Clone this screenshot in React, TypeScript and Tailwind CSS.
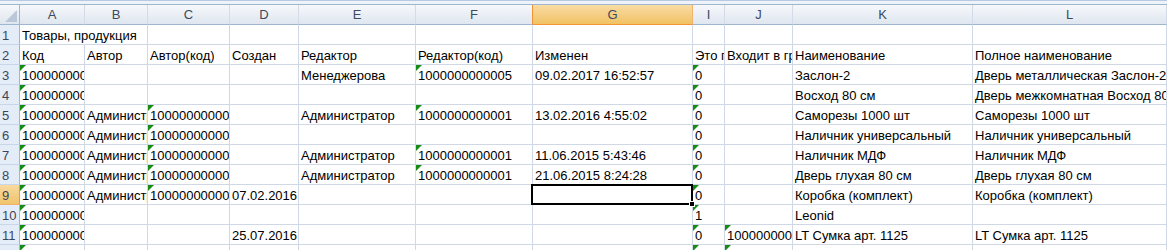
import React from 'react';

const COLS = ['A', 'B', 'C', 'D', 'E', 'F', 'G', 'I', 'J', 'K', 'L'];

type Row = { n: number; v: Record<string, string>; tri: string };

const ADM = 'Администратор';
const ID1 = '1000000000001';

const rows: Row[] = [
  {
    n: 2,
    v: {
      A: 'Код', B: 'Автор', C: 'Автор(код)', D: 'Создан', E: 'Редактор', F: 'Редактор(код)',
      G: 'Изменен', I: 'Это группа', J: 'Входит в группу', K: 'Наименование', L: 'Полное наименование',
    },
    tri: '',
  },
  {
    n: 3,
    v: { A: '1000000000005', E: 'Менеджерова', F: '1000000000005', G: '09.02.2017 16:52:57', I: '0', K: 'Заслон-2', L: 'Дверь металлическая Заслон-2' },
    tri: 'AFI',
  },
  { n: 4, v: { A: '1000000000006', I: '0', K: 'Восход 80 см', L: 'Дверь межкомнатная Восход 80 см' }, tri: 'AI' },
  {
    n: 5,
    v: { A: '1000000000007', B: ADM, C: ID1, E: ADM, F: ID1, G: '13.02.2016 4:55:02', I: '0', K: 'Саморезы 1000 шт', L: 'Саморезы 1000 шт' },
    tri: 'ACFI',
  },
  { n: 6, v: { A: '1000000000008', B: ADM, C: ID1, I: '0', K: 'Наличник универсальный', L: 'Наличник универсальный' }, tri: 'ACI' },
  {
    n: 7,
    v: { A: '1000000000009', B: ADM, C: ID1, E: ADM, F: ID1, G: '11.06.2015 5:43:46', I: '0', K: 'Наличник МДФ', L: 'Наличник МДФ' },
    tri: 'ACFI',
  },
  {
    n: 8,
    v: { A: '1000000000010', B: ADM, C: ID1, E: ADM, F: ID1, G: '21.06.2015 8:24:28', I: '0', K: 'Дверь глухая 80 см', L: 'Дверь глухая 80 см' },
    tri: 'ACFI',
  },
  {
    n: 9,
    v: { A: '1000000000011', B: ADM, C: ID1, D: '07.02.2016', I: '0', K: 'Коробка (комплект)', L: 'Коробка (комплект)' },
    tri: 'ACI',
  },
  { n: 10, v: { A: '1000000000012', I: '1', K: 'Leonid' }, tri: 'AI' },
  { n: 11, v: { A: '1000000000013', D: '25.07.2016', I: '0', J: ID1, K: 'LT Сумка арт. 1125', L: 'LT Сумка арт. 1125' }, tri: 'AIJ' },
  { n: 12, v: { A: '1000000000014', I: '0', J: ID1 }, tri: 'AIJ' },
];

const Tri = () => (
  <span className="absolute left-0 top-0 h-0 w-0 border-t-[6px] border-r-[6px] border-t-[#168c16] border-r-transparent" />
);

const cell = 'relative overflow-hidden whitespace-nowrap border-r border-b border-[#d0d7e5] bg-white px-[2px] pt-[2px] leading-[18px] text-black';

const RowHead = ({ n }: { n: number }) => {
  const on = n === 9;
  return (
    <div
      className={
        on
          ? 'border-r border-b border-r-[#f29436] border-b-[#f2b26b] bg-linear-to-b from-[#f9d99f] to-[#f1c46a] pl-[2px] pt-[2px] leading-[18px] text-[#3d4657]'
          : 'border-r border-b border-r-[#9eb6ce] border-b-[#c9d6e8] bg-[#e4ecf7] pl-[2px] pt-[2px] leading-[18px] text-[#3d4657]'
      }
    >
      {n}
    </div>
  );
};

export default function App() {
  return (
    <div className="h-[250px] w-[1167px] overflow-hidden bg-white font-['Liberation_Sans',Arial,sans-serif] text-[13px]">
      <div className="h-[5px] border-t border-b border-t-[#b7cae2] border-b-[#9eb6ce] bg-[#eef3fa]" />
      <div className="grid grid-cols-[20px_65px_63px_82px_69px_117px_117px_160px_32px_68px_180px_194px] auto-rows-[20px]">
        {/* column headers */}
        <div className="relative border-r border-b border-r-[#9eb6ce] border-b-[#9eb6ce] bg-linear-to-b from-[#f6f8fb] to-[#dfe6ef]">
          <svg className="absolute left-0 top-0" width="19" height="19" viewBox="0 0 19 19">
            <polygon points="17,5 17,17 5,17" fill="#b9c7d9" />
          </svg>
        </div>
        {COLS.map((c) =>
          c === 'G' ? (
            <div
              key={c}
              className="flex items-center justify-center border-r border-b border-r-[#f2b26b] border-b-[#f29436] bg-linear-to-b from-[#f9dba3] to-[#f1c262] text-[#3b4a5e]"
            >
              {c}
            </div>
          ) : (
            <div
              key={c}
              className={`flex items-center justify-center border-r border-b border-b-[#9eb6ce] bg-linear-to-b from-[#f6f8fb] to-[#dfe6ef] text-[#3b4a5e] ${
                c === 'F' ? 'border-r-[#f29436]' : 'border-r-[#d2dbe7]'
              }`}
            >
              {c}
            </div>
          )
        )}

        {/* row 1 */}
        <RowHead n={1} />
        <div className={`${cell} col-span-2 overflow-visible`}>Товары, продукция</div>
        {COLS.slice(2).map((c) => (
          <div key={c} className={cell} />
        ))}

        {rows.map((r) => (
          <React.Fragment key={r.n}>
            <RowHead n={r.n} />
            {COLS.map((c) => {
              const sel = r.n === 9 && c === 'G';
              return (
                <div key={c} className={sel ? `${cell} z-10 overflow-visible` : cell}>
                  {r.tri.includes(c) && <Tri />}
                  {r.v[c] ?? ''}
                  {sel && (
                    <>
                      <span className="absolute -left-[2px] -top-[1px] -right-[1px] -bottom-[1px] border-2 border-black" />
                      <span className="absolute -right-[3px] -bottom-[3px] h-[6px] w-[6px] border border-white bg-black" />
                    </>
                  )}
                </div>
              );
            })}
          </React.Fragment>
        ))}
      </div>
    </div>
  );
}
